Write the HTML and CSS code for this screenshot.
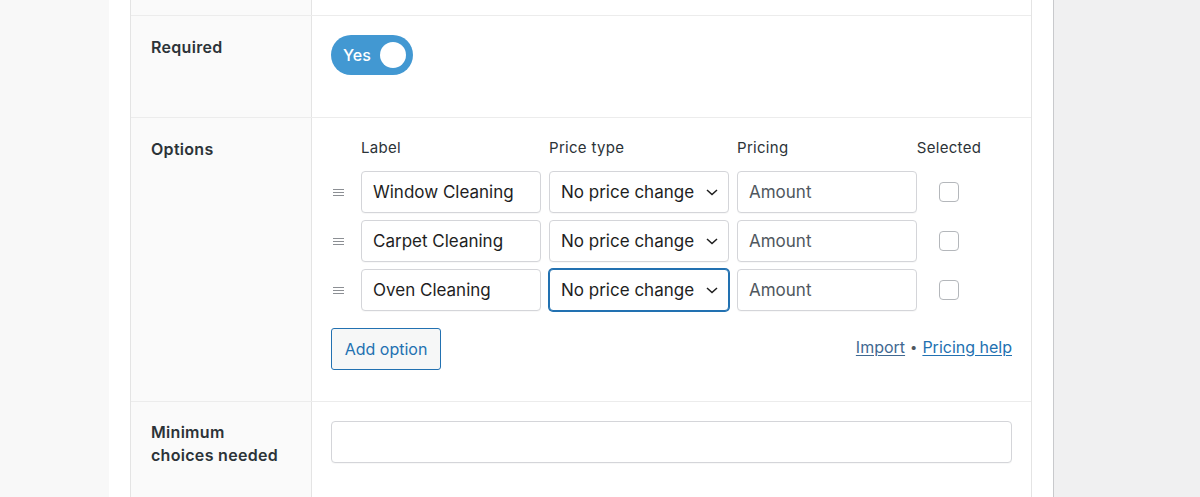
FILE: index.html
```html
<!DOCTYPE html>
<html lang="en">
<head>
<meta charset="utf-8">
<title>Field settings</title>
<link rel="stylesheet" href="styles.css">
</head>
<body>
<div class="page">
  <div class="gutter"></div>
  <div class="panel">
    <div class="table">
      <div class="row row-top">
        <div class="label-cell"></div>
        <div class="value-cell"></div>
      </div>
      <div class="row row-required">
        <div class="label-cell"><span class="label">Required</span></div>
        <div class="value-cell">
          <div class="toggle"><span class="toggle-text">Yes</span><span class="knob"></span></div>
        </div>
      </div>
      <div class="row row-options">
        <div class="label-cell"><span class="label">Options</span></div>
        <div class="value-cell">
          <div class="opt-grid">
            <div class="hd-spacer"></div>
            <div class="hd">Label</div>
            <div class="hd">Price type</div>
            <div class="hd">Pricing</div>
            <div class="hd hd-center">Selected</div>

            <div class="handle"><span></span><span></span><span></span></div>
            <div class="field">Window Cleaning</div>
            <div class="field select">No price change<svg class="chev" width="12" height="7" viewBox="0 0 12 7"><path d="M1 1 L6 5.5 L11 1" fill="none" stroke="#1e1e1e" stroke-width="1.5"/></svg></div>
            <div class="field placeholder">Amount</div>
            <div class="check-cell"><span class="check"></span></div>

            <div class="handle"><span></span><span></span><span></span></div>
            <div class="field">Carpet Cleaning</div>
            <div class="field select">No price change<svg class="chev" width="12" height="7" viewBox="0 0 12 7"><path d="M1 1 L6 5.5 L11 1" fill="none" stroke="#1e1e1e" stroke-width="1.5"/></svg></div>
            <div class="field placeholder">Amount</div>
            <div class="check-cell"><span class="check"></span></div>

            <div class="handle"><span></span><span></span><span></span></div>
            <div class="field">Oven Cleaning</div>
            <div class="field select focused">No price change<svg class="chev" width="12" height="7" viewBox="0 0 12 7"><path d="M1 1 L6 5.5 L11 1" fill="none" stroke="#1e1e1e" stroke-width="1.5"/></svg></div>
            <div class="field placeholder">Amount</div>
            <div class="check-cell"><span class="check"></span></div>
          </div>
          <div class="opt-footer">
            <button class="btn">Add option</button>
            <div class="links"><a class="link visited">Import</a><span class="dot">•</span><a class="link">Pricing help</a></div>
          </div>
        </div>
      </div>
      <div class="row row-min">
        <div class="label-cell"><span class="label">Minimum<br>choices needed</span></div>
        <div class="value-cell"><div class="field wide"></div></div>
      </div>
    </div>
  </div>
  <div class="rest"></div>
</div>
</body>
</html>
```

FILE: styles.css
```css
html, body {
  margin: 0;
  padding: 0;
  height: 100%;
}
body {
  font-family: Inter, "Noto Sans", "Liberation Sans", sans-serif;
  color: #2c3338;
  background: #f8f8f8;
  overflow: hidden;
}
.page {
  display: flex;
  height: 497px;
}
.gutter {
  width: 109px;
  flex: none;
  background: #f8f8f8;
}
.panel {
  width: 902px;
  flex: none;
  background: #fff;
  padding: 0 21px;
  border-right: 1px solid #c8c9cc;
}
.rest {
  flex: 1;
  background: #f0f0f1;
}
.table {
  border-left: 1px solid #e4e4e4;
  border-right: 1px solid #e4e4e4;
  height: 100%;
  display: flex;
  flex-direction: column;
}
.row {
  display: flex;
  border-bottom: 1px solid #ececec;
}
.row-min {
  border-bottom: none;
  flex: 1;
}
.label-cell {
  width: 181px;
  box-sizing: border-box;
  flex: none;
  background: #fafafa;
  border-right: 1px solid #e4e4e4;
  padding: 20px 0 0 20px;
}
.value-cell {
  flex: 1;
  padding: 20px 19px;
}
.row-top .label-cell,
.row-top .value-cell {
  height: 15px;
  padding: 0;
}
.label {
  display: block;
  font-size: 16px;
  font-weight: 600;
  line-height: 22px;
  letter-spacing: 0.3px;
  color: #2c3338;
}
.row-required .value-cell {
  height: 63px;
  padding-top: 19px;
  padding-bottom: 19px;
}
.toggle {
  width: 82px;
  height: 40px;
  box-sizing: border-box;
  border-radius: 20px;
  background: #4298d2;
  display: flex;
  align-items: center;
  padding: 0 7px 0 12px;
  justify-content: space-between;
}
.toggle-text {
  color: #fff;
  font-size: 16px;
  font-weight: 500;
}
.knob {
  width: 26px;
  height: 26px;
  border-radius: 50%;
  background: #fff;
}
.row-options .value-cell {
  padding-bottom: 31px;
}
.opt-grid {
  display: grid;
  grid-template-columns: 22px 180px 180px 180px 48px;
  grid-template-rows: 26px;
  grid-auto-rows: 42px;
  column-gap: 8px;
  row-gap: 7px;
}
.hd {
  font-size: 15px;
  line-height: 20px;
  letter-spacing: 0.3px;
  color: #2c3338;
  white-space: nowrap;
}
.hd-center {
  display: flex;
  justify-content: center;
}
.handle {
  display: flex;
  flex-direction: column;
  justify-content: center;
  gap: 2px;
  padding-left: 2px;
}
.handle span {
  display: block;
  width: 11px;
  height: 1px;
  background: #8c8f94;
}
.field {
  box-sizing: border-box;
  height: 42px;
  border: 1px solid #d4d5d9;
  border-radius: 4px;
  background: #fff;
  padding: 0 11px;
  font-size: 17px;
  color: #1e1e1e;
  display: flex;
  align-items: center;
  white-space: nowrap;
  box-shadow: 0 1px 1px rgba(0,0,0,0.03);
}
.select {
  justify-content: space-between;
  padding-right: 10px;
}
.focused {
  border-color: #2271b1;
  box-shadow: 0 0 0 1px #2271b1;
}
.placeholder {
  color: #50575e;
}
.check-cell {
  display: flex;
  align-items: center;
  justify-content: center;
}
.check {
  width: 20px;
  height: 20px;
  box-sizing: border-box;
  border: 1px solid #b4b7bb;
  border-radius: 4px;
  background: #fff;
}
.opt-footer {
  margin-top: 17px;
  display: flex;
  justify-content: space-between;
  align-items: center;
}
.btn {
  height: 42px;
  width: 110px;
  box-sizing: border-box;
  border: 1px solid #2271b1;
  border-radius: 3px;
  background: #f6f7f7;
  color: #2271b1;
  font-family: inherit;
  font-size: 16px;
  padding: 0;
}
.links {
  font-size: 16px;
  display: flex;
  align-items: center;
  gap: 5px;
  margin-top: -4px;
}
.link {
  color: #2271b1;
  text-decoration: underline;
  text-underline-offset: 2px;
}
.visited {
  color: #3f6891;
}
.dot {
  color: #50575e;
  font-size: 13px;
}
.row-min .label-cell {
  padding-top: 19px;
}
.row-min .value-cell {
  padding-top: 19px;
}
.row-min .label {
  line-height: 23px;
}
.wide {
  width: 100%;
}
```
